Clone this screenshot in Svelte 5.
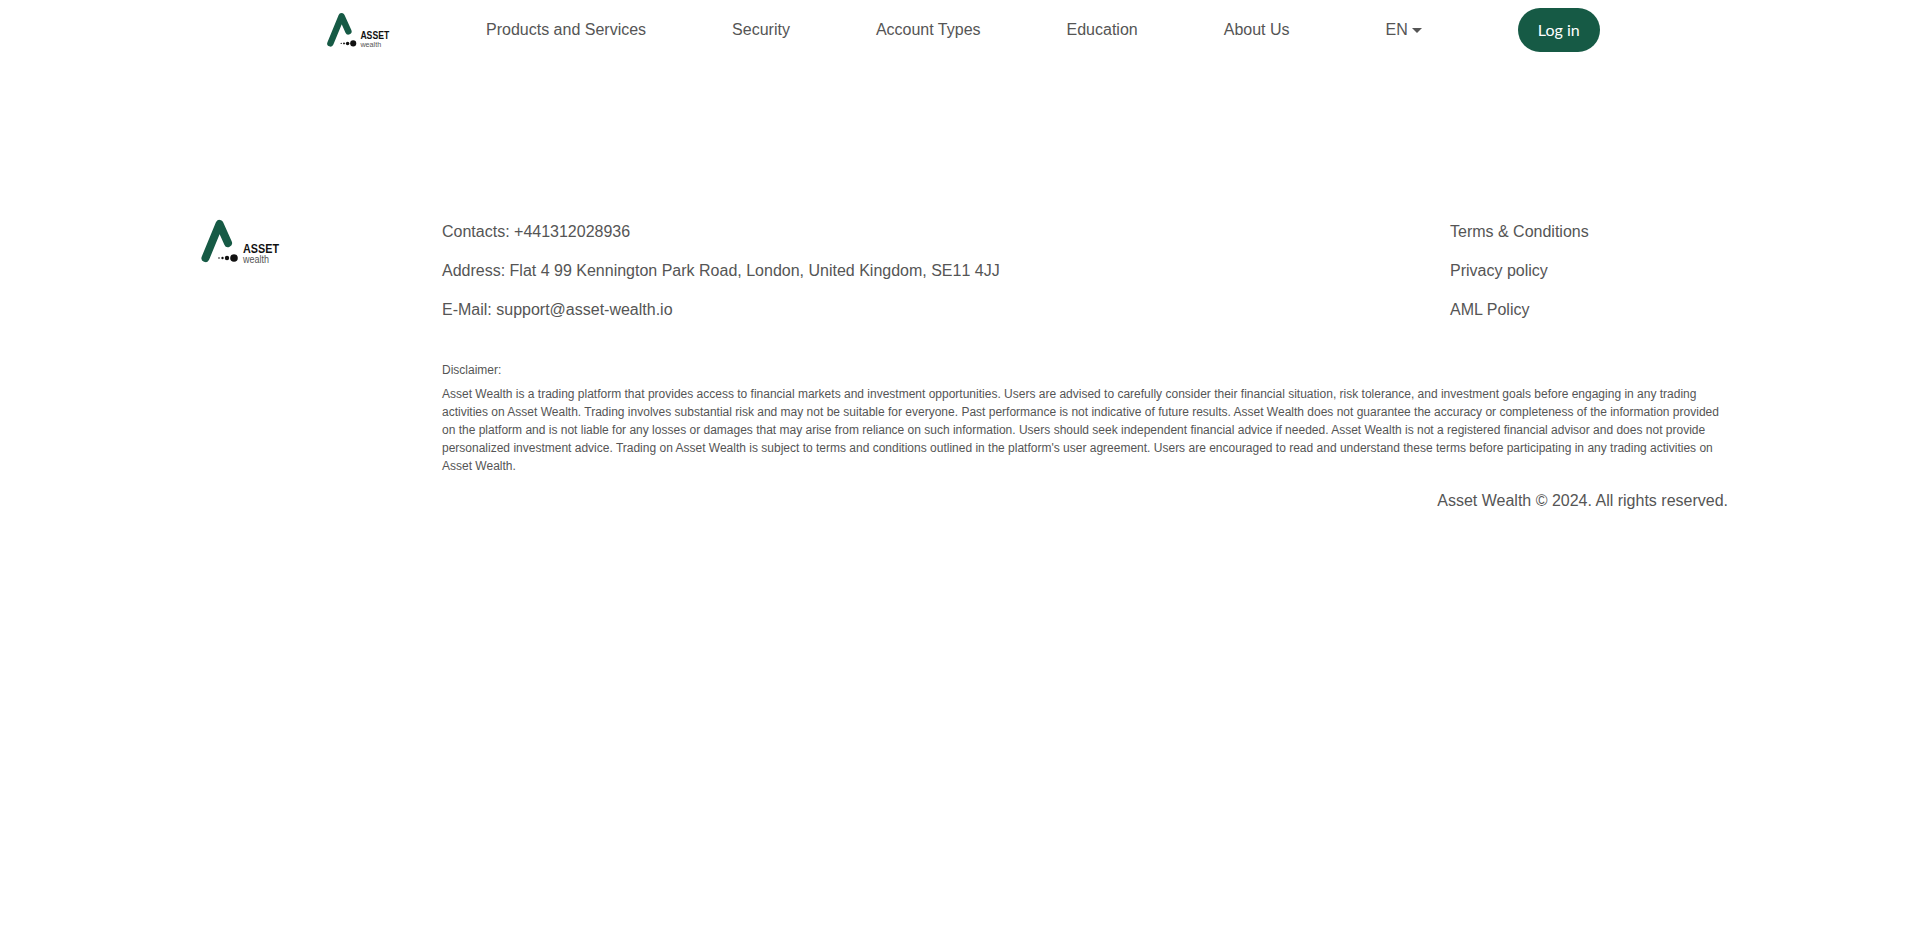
<script>
	const navItems = ['Products and Services', 'Security', 'Account Types', 'Education', 'About Us'];
	const contacts = [
		'Contacts: +441312028936',
		'Address: Flat 4 99 Kennington Park Road, London, United Kingdom, SE11 4JJ',
		'E-Mail: support@asset-wealth.io'
	];
	const policies = ['Terms & Conditions', 'Privacy policy', 'AML Policy'];
</script>

{#snippet logo(cls)}
	<svg class={cls} viewBox="0 0 80 44" aria-label="Asset Wealth">
		<path d="M5.5 38 L19.5 4 L28 23" fill="none" stroke="#165a45" stroke-width="8" stroke-linecap="round" stroke-linejoin="round" />
		<circle cx="19" cy="38" r="0.8" fill="#111" />
		<circle cx="22.5" cy="38" r="1.2" fill="#111" />
		<circle cx="27" cy="38" r="2.2" fill="#111" />
		<circle cx="34" cy="38" r="3.8" fill="#111" />
		<text x="43" y="33" class="logo-name" textLength="36" lengthAdjust="spacingAndGlyphs">ASSET</text>
		<text x="43" y="43" class="logo-sub" textLength="26" lengthAdjust="spacingAndGlyphs">wealth</text>
	</svg>
{/snippet}

<div class="page">
	<header class="header">
		{@render logo('logo-small')}
		<nav class="nav">
			{#each navItems as item}
				<a class="nav-link" href="#top">{item}</a>
			{/each}
			<span class="lang">EN<span class="caret"></span></span>
		</nav>
		<button class="login">Log in</button>
	</header>

	<footer class="footer">
		<div class="footer-logo">{@render logo('logo-large')}</div>
		<div class="footer-body">
			<div class="footer-links">
				<div class="link-col contacts">
					{#each contacts as line}
						<p>{line}</p>
					{/each}
				</div>
				<div class="link-col">
					{#each policies as line}
						<p>{line}</p>
					{/each}
				</div>
			</div>
			<p class="small disclaimer-title">Disclaimer:</p>
			<p class="small disclaimer">
				Asset Wealth is a trading platform that provides access to financial markets and investment opportunities. Users are advised to carefully consider their financial situation, risk tolerance, and investment goals before engaging in any trading activities on Asset Wealth. Trading involves substantial risk and may not be suitable for everyone. Past performance is not indicative of future results. Asset Wealth does not guarantee the accuracy or completeness of the information provided on the platform and is not liable for any losses or damages that may arise from reliance on such information. Users should seek independent financial advice if needed. Asset Wealth is not a registered financial advisor and does not provide personalized investment advice. Trading on Asset Wealth is subject to terms and conditions outlined in the platform's user agreement. Users are encouraged to read and understand these terms before participating in any trading activities on Asset Wealth.
			</p>
			<p class="copyright">Asset Wealth © 2024. All rights reserved.</p>
		</div>
	</footer>
</div>

<style>
	:global(body) {
		margin: 0;
		background: #fff;
	}

	.page {
		font-family: "Liberation Sans", Arial, sans-serif;
		font-size: 16px;
		line-height: 24px;
		color: #555;
		min-height: 925px;
	}

	p {
		margin: 0;
	}

	.header {
		display: flex;
		align-items: center;
		height: 60px;
		padding-left: 326px;
	}

	svg {
		overflow: visible;
	}

	.logo-small {
		width: 64px;
		height: 35.2px;
		display: block;
		margin-top: 1px;
	}

	.logo-large {
		width: 80px;
		height: 44px;
		display: block;
	}

	.logo-name {
		font-family: "Liberation Sans", Arial, sans-serif;
		font-size: 13.5px;
		font-weight: 700;
		fill: #111;
	}

	.logo-sub {
		font-family: "Liberation Sans", Arial, sans-serif;
		font-size: 10px;
		fill: #555;
	}

	.nav {
		display: flex;
		align-items: center;
		gap: 86px;
		margin-left: 96px;
	}

	.nav-link {
		color: #555;
		text-decoration: none;
	}

	.lang {
		display: flex;
		align-items: center;
		gap: 4px;
		margin-left: 10px;
	}

	.caret {
		width: 0;
		height: 0;
		border-left: 5px solid transparent;
		border-right: 5px solid transparent;
		border-top: 5px solid #555;
	}

	.login {
		margin-left: 96px;
		width: 82px;
		height: 44px;
		border: 0;
		border-radius: 22px;
		background: #165a45;
		color: #fff;
		font-family: "Lato", sans-serif;
		font-size: 16px;
		padding: 0 0 2px;
	}

	.footer {
		display: flex;
		margin-top: 160px;
		padding-left: 200px;
	}

	.footer-logo {
		width: 242px;
		flex: none;
	}

	.footer-body {
		width: 1286px;
	}

	.footer-links {
		display: flex;
		margin-bottom: 39px;
	}

	.link-col {
		display: flex;
		flex-direction: column;
		gap: 15px;
	}

	.contacts {
		width: 1008px;
		font-kerning: none;
	}

	.small {
		font-size: 12px;
		line-height: 18px;
	}

	.disclaimer-title {
		margin-bottom: 6px;
	}

	.copyright {
		text-align: right;
		margin-top: 14px;
	}
</style>
